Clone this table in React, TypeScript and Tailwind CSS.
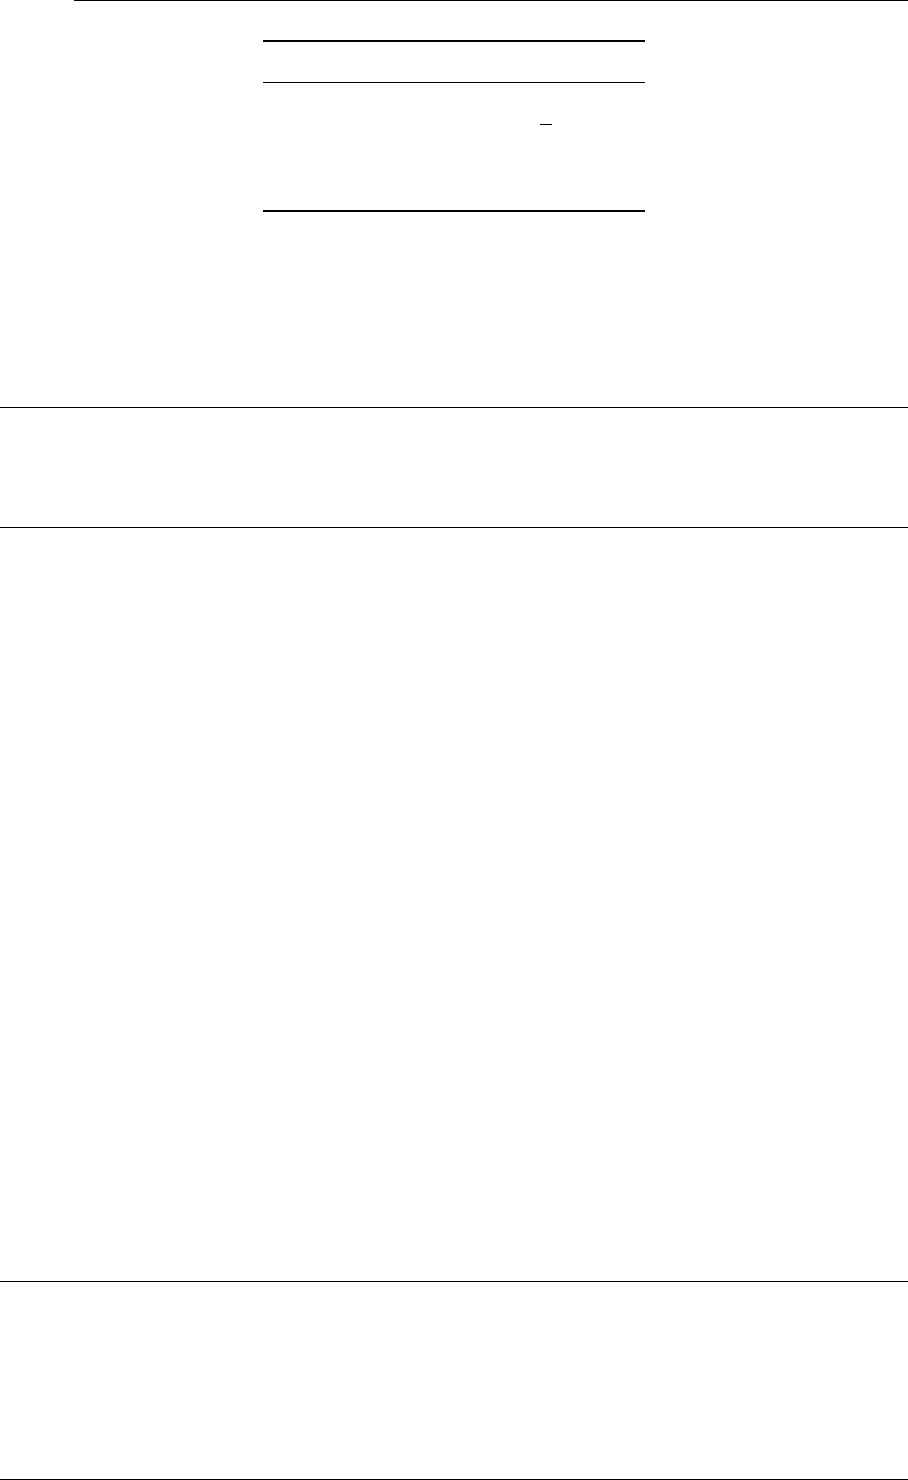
export default function App() {
  return (
    <div className="w-[908px] h-[1480px] bg-white overflow-hidden" style={{ fontFamily: '"Liberation Serif", serif' }}>
      {/* top rule */}
      <div className="ml-[74px] h-px bg-black" />

      {/* booktabs-style table */}
      <div className="ml-[263px] w-[382px] mt-[39px]">
        <div className="h-[2px] bg-black" />
        <div className="h-[40px]" />
        <div className="h-px bg-black" />
        <div className="h-[127px] pt-[41px]">
          <div className="ml-[277px] w-[12px] h-px bg-black" />
        </div>
        <div className="h-[2px] bg-black" />
      </div>

      {/* section rules */}
      <div className="mt-[195px] h-px bg-black" />
      <div className="mt-[119px] h-px bg-black" />
      <div className="mt-[753px] h-px bg-black" />
      <div className="mt-[197px] h-px bg-black" />
    </div>
  );
}
